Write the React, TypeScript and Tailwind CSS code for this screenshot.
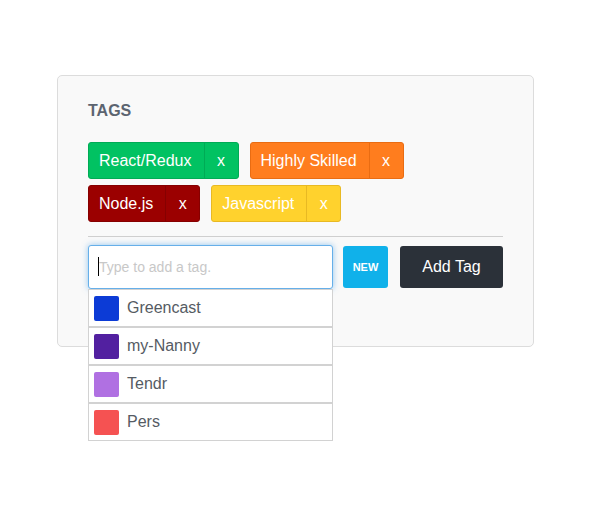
import React from "react";

const tags = [
  { label: "React/Redux", bg: "bg-[#01c262]", border: "border-[#00ab55]" },
  { label: "Highly Skilled", bg: "bg-[#ff7d1e]", border: "border-[#e96c12]" },
  { label: "Node.js", bg: "bg-[#9b0000]", border: "border-[#860000]" },
  { label: "Javascript", bg: "bg-[#ffd22d]", border: "border-[#e8b923]" },
];

const options = [
  { label: "Greencast", color: "bg-[#0c3bd6]" },
  { label: "my-Nanny", color: "bg-[#5220a0]" },
  { label: "Tendr", color: "bg-[#b070e2]" },
  { label: "Pers", color: "bg-[#f55252]" },
];

export default function App() {
  return (
    <div
      className="min-h-[511px] w-[591px] bg-white pt-[75px] pl-[57px]"
      style={{ fontFamily: '"Liberation Sans", Arial, sans-serif' }}
    >
      <div className="w-[477px] rounded-[5px] border border-[#dcdcdc] bg-[#f9f9f9] px-[30px] pt-[25px] pb-[57px]">
        <h3 className="text-[16px] font-bold leading-[20px] text-[#5c6470]">TAGS</h3>
        <div className="mt-[21px] flex flex-wrap gap-x-[11px] gap-y-[6px]">
          {tags.map((t) => (
            <div
              key={t.label}
              className={`flex h-[37px] items-stretch rounded-[3px] border text-[16px] text-white ${t.bg} ${t.border}`}
            >
              <span className={`flex items-center border-r pl-[10px] pr-[12px] ${t.border}`}>{t.label}</span>
              <span className="flex w-[33px] items-center justify-center">x</span>
            </div>
          ))}
        </div>
        <div className="mt-[14px] h-px bg-[#cfcfcf]" />
        <div className="mt-[8px] flex items-center">
          <div className="relative w-[245px]">
            <div className="relative flex h-[44px] items-center rounded-[3px] border border-[#66afe9] bg-white pl-[10px] text-[14px] text-[#c8c8c8] shadow-[0_0_6px_rgba(102,175,233,0.7)]">
              <span className="absolute left-[9px] top-[11px] h-[19px] w-px bg-black" />
              Type to add a tag.
            </div>
            <div className="absolute left-0 top-full w-[245px]">
              {options.map((o) => (
                <div
                  key={o.label}
                  className="flex h-[38px] items-center gap-[8px] border border-[#d2d2d2] bg-white pl-[5px] text-[16px] text-[#555b63]"
                >
                  <span className={`h-[25px] w-[25px] rounded-[2px] ${o.color}`} />
                  {o.label}
                </div>
              ))}
            </div>
          </div>
          <button className="ml-[10px] flex h-[42px] w-[45px] items-center justify-center rounded-[3px] bg-[#10b1ea] text-[11px] font-bold text-white">
            NEW
          </button>
          <button className="ml-[12px] flex h-[42px] w-[103px] items-center justify-center rounded-[3px] bg-[#2b3139] text-[16px] text-white">
            Add Tag
          </button>
        </div>
      </div>
    </div>
  );
}
